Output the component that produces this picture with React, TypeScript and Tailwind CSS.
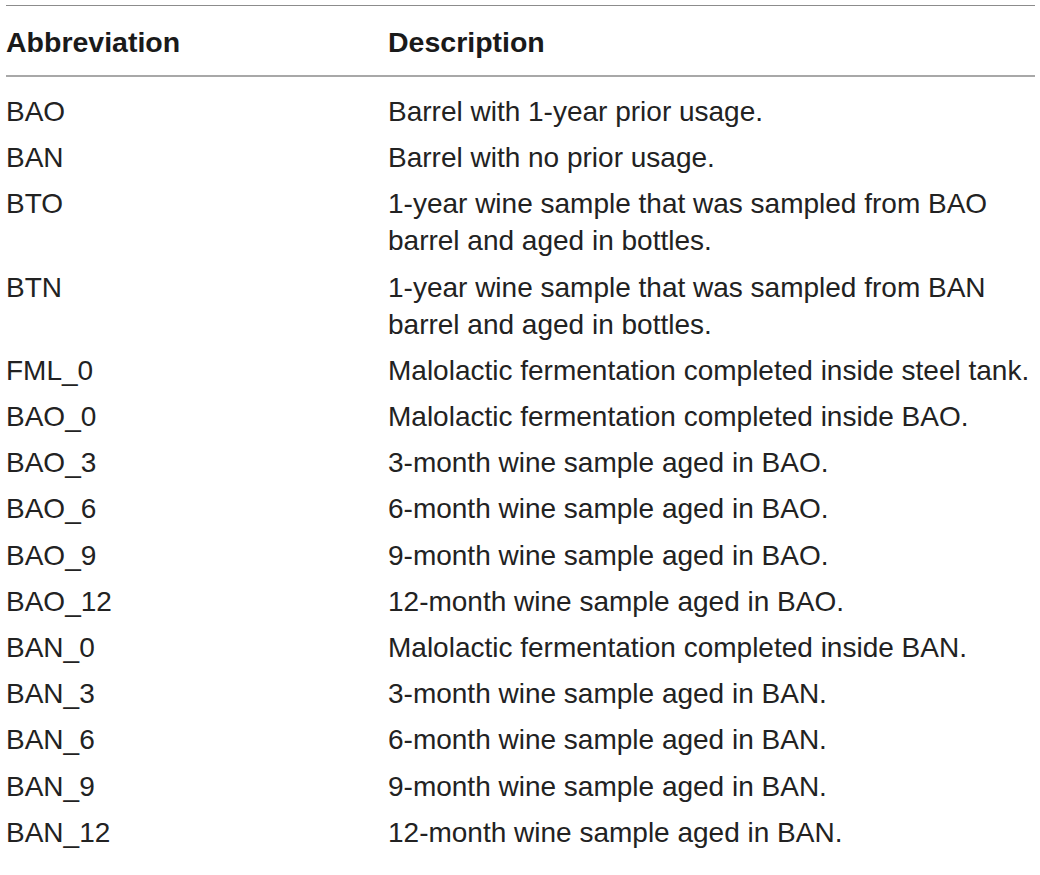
const rows: [string, string[]][] = [
  ["BAO", ["Barrel with 1-year prior usage."]],
  ["BAN", ["Barrel with no prior usage."]],
  ["BTO", ["1-year wine sample that was sampled from BAO", "barrel and aged in bottles."]],
  ["BTN", ["1-year wine sample that was sampled from BAN", "barrel and aged in bottles."]],
  ["FML_0", ["Malolactic fermentation completed inside steel tank."]],
  ["BAO_0", ["Malolactic fermentation completed inside BAO."]],
  ["BAO_3", ["3-month wine sample aged in BAO."]],
  ["BAO_6", ["6-month wine sample aged in BAO."]],
  ["BAO_9", ["9-month wine sample aged in BAO."]],
  ["BAO_12", ["12-month wine sample aged in BAO."]],
  ["BAN_0", ["Malolactic fermentation completed inside BAN."]],
  ["BAN_3", ["3-month wine sample aged in BAN."]],
  ["BAN_6", ["6-month wine sample aged in BAN."]],
  ["BAN_9", ["9-month wine sample aged in BAN."]],
  ["BAN_12", ["12-month wine sample aged in BAN."]],
];

export default function App() {
  return (
    <div className="w-[1040px] h-[875px] bg-white pt-[5px] font-['Liberation_Sans',Arial,sans-serif] text-[#222]">
      <div className="ml-[6px] w-[1029px]">
        {/* Header */}
        <div className="border-t border-[#8c8c8c] border-b-2 border-b-[#a8a8a8] pt-[18px] pb-[15px] grid grid-cols-[382px_1fr] text-[28.5px] leading-[36px] font-bold text-[#1a1a1a]">
          <div>Abbreviation</div>
          <div>Description</div>
        </div>

        {/* Body */}
        <div className="pt-[12px]">
          {rows.map(([abbr, desc]) => (
            <div
              key={abbr}
              className="grid grid-cols-[382px_1fr] py-[5.1px] text-[28px] leading-[36px] whitespace-nowrap"
            >
              <div>{abbr}</div>
              <div>
                {desc.map((line, i) => (
                  <div key={i} className={i > 0 ? "mt-[1px]" : ""}>
                    {line}
                  </div>
                ))}
              </div>
            </div>
          ))}
        </div>
      </div>
    </div>
  );
}
